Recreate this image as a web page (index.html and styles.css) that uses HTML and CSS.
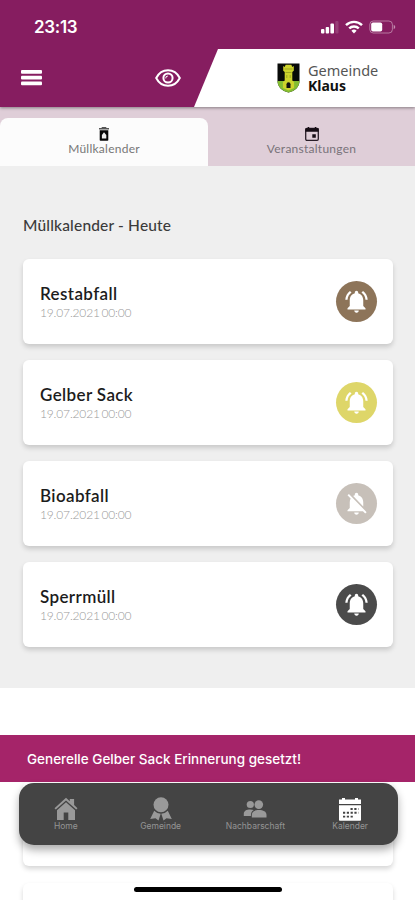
FILE: index.html
```html
<!DOCTYPE html>
<html lang="de">
<head>
<meta charset="utf-8">
<title>Gemeinde Klaus</title>
<link rel="stylesheet" href="styles.css">
</head>
<body>
<svg class="defs" width="0" height="0">
  <symbol id="bell" viewBox="0 0 24 24"><path d="M7.58 4.08 6.15 2.65C3.75 4.48 2.17 7.3 2.03 10.5h2c.15-2.65 1.51-4.97 3.55-6.42zm12.39 6.42h2c-.15-3.2-1.73-6.02-4.12-7.85l-1.42 1.43c2.02 1.45 3.39 3.77 3.54 6.42zM18 11c0-3.07-1.64-5.64-4.5-6.32V4c0-.83-.67-1.5-1.5-1.5s-1.5.67-1.5 1.5v.68C7.63 5.36 6 7.92 6 11v5l-2 2v1h16v-1l-2-2v-5zm-6 11c.14 0 .27-.01.4-.04.65-.14 1.18-.58 1.44-1.18.1-.24.15-.5.15-.78h-4c.01 1.1.9 2 2.01 2z"/></symbol>
  <symbol id="bell-off" viewBox="0 0 24 24"><path d="M20 18.69 7.84 6.14 5.27 3.49 4 4.76l2.8 2.8v.01c-.52.99-.8 2.16-.8 3.42v5l-2 2v1h13.73l2 2L21 19.72l-1-1.03zM12 22c1.11 0 2-.89 2-2h-4c0 1.11.89 2 2 2zm6-7.32V11c0-3.08-1.64-5.64-4.5-6.32V4c0-.83-.67-1.5-1.5-1.5s-1.5.67-1.5 1.5v.68c-.15.03-.29.08-.42.12-.1.03-.2.07-.3.11h-.01c-.01 0-.01 0-.02.01-.23.09-.46.2-.68.31 0 0-.01 0-.01.01L18 14.68z"/></symbol>
</svg>
<div class="app">
  <header class="header">
    <div class="status">
      <span class="time">23:13</span>
      <span class="signals">
        <svg width="18" height="14" viewBox="0 0 18 14"><g fill="#fff"><rect x="0" y="9" width="3.4" height="4.5" rx="1"/><rect x="4.7" y="7" width="3.4" height="6.5" rx="1"/><rect x="9.4" y="3.5" width="3.6" height="10" rx="1"/><rect x="14.3" y="1" width="3.2" height="12.5" rx="1" opacity=".15"/></g></svg>
        <svg width="18" height="14" viewBox="0 0 18 14"><g fill="none" stroke="#fff" stroke-width="2.4"><path d="M1 5.2a11.4 11.4 0 0 1 16 0"/><path d="M4.2 8.4a6.9 6.9 0 0 1 9.6 0"/></g><path fill="#fff" d="M6.4 10.7a3.8 3.8 0 0 1 5.2 0L9 13.4z"/></svg>
        <svg width="27" height="14" viewBox="0 0 27 14"><rect x=".8" y="1" width="22.6" height="12" rx="3.5" fill="none" stroke="#fff" stroke-opacity=".4"/><rect x="2.2" y="2.5" width="11" height="9" rx="1.8" fill="#fff"/><path d="M24.7 4.8v4.4q1.6-.7 1.6-2.2t-1.6-2.2z" fill="#fff" opacity=".5"/></svg>
      </span>
    </div>
    <div class="bar">
      <svg class="menu" width="21" height="16" viewBox="0 0 21 16"><g fill="#fff"><rect y="0" width="21" height="3.7" rx="1"/><rect y="5.8" width="21" height="3.7" rx="1"/><rect y="11.6" width="21" height="3.7" rx="1"/></g></svg>
      <svg class="eye" width="26" height="18" viewBox="0 0 26 18"><g fill="none" stroke="#fff" stroke-width="2"><path d="M1.2 9C3.6 4.3 8 1.2 13 1.2S22.4 4.3 24.8 9C22.4 13.7 18 16.8 13 16.8S3.6 13.7 1.2 9z"/><circle cx="13" cy="9" r="4.6"/></g><path d="M10.8 9.4a2 2 0 0 1 2-2.3" fill="none" stroke="#fff" stroke-width="1"/></svg>
      <div class="brand">
        <svg class="crest" width="23" height="30" viewBox="0 0 23 30"><path d="M.5.5h22v17c0 6.5-4.500 10.500-11 12C5 28 .5 24 .5 17.500z" fill="#080a08"/><path d="M.5 18h22c-.2 6.200-4.600 10-11 11.500C5.100 28 .7 24.200.5 18z" fill="#83bd32"/><path d="M6.200 3 7.800 4l.8-2.200h5.800l.8 2.200 1.600-1v4.800l-1.500 1.200v8.500l1.800 1.500v6l-5.600 2.500L5.900 25v-6l1.800-1.500V9L6.200 7.800z" fill="#cdd32c"/><path d="M7.500 6h8M8.500 9.500h6M9.800 12v3M13.200 12v3" stroke="#8a941e" stroke-width=".7"/><path d="M9.500 25v-3.800a2 2 0 0 1 4 0V25z" fill="#111"/></svg>
        <div class="brand-name"><span>Gemeinde</span><b>Klaus</b></div>
      </div>
    </div>
  </header>
  <nav class="tabs">
    <div class="tab active">
      <svg width="10" height="14" viewBox="0 0 10 14"><path d="M3 0h4l.6 1H10v1.500H0V1h2.400z" fill="#555"/><path d="M.7 3.300h8.600V13q0 .8-.8.800h-7q-.8 0-.8-.8z" fill="#080808"/><path d="M5 5.200 7.300 8v3.400H2.900V8z" fill="#eee"/></svg>
      <span>Müllkalender</span>
    </div>
    <div class="tab">
      <svg width="14" height="14" viewBox="0 0 14 14"><rect x=".7" y="1.500" width="12.600" height="11.800" rx="1.200" fill="none" stroke="#291e28" stroke-width="1.300"/><path d="M.4 1.300h13.200v3.400H.4zM2.700 0h1.500v2H2.700zM9.800 0h1.500v2H9.800zM7.300 7.300h3.500v3.400H7.300z" fill="#160d15"/></svg>
      <span>Veranstaltungen</span>
    </div>
  </nav>
  <main class="today">
    <h1>Müllkalender - Heute</h1>
    <div class="cards">
      <article class="card"><div><h2>Restabfall</h2><time>19.07.2021 00:00</time></div><span class="badge brown"><svg><use href="#bell"/></svg></span></article>
      <article class="card"><div><h2>Gelber Sack</h2><time>19.07.2021 00:00</time></div><span class="badge yellow"><svg><use href="#bell"/></svg></span></article>
      <article class="card"><div><h2>Bioabfall</h2><time>19.07.2021 00:00</time></div><span class="badge muted"><svg><use href="#bell-off"/></svg></span></article>
      <article class="card"><div><h2>Sperrmüll</h2><time>19.07.2021 00:00</time></div><span class="badge dark"><svg><use href="#bell"/></svg></span></article>
    </div>
  </main>
  <section class="upcoming"><div class="card"></div><div class="card"></div></section>
  <div class="overlay">
    <div class="snackbar"><span>Generelle Gelber Sack Erinnerung gesetzt!</span></div>
    <nav class="dock">
      <div class="item"><svg width="24" height="24" viewBox="0 0 24 24"><g fill="#999"><path d="M12 .8 15.800 4.200V2h4.300v6l3.400 3.200-1.300 1.400L12 3.500 1.800 12.600.5 11.200z"/><path d="M12 5.300 21 13.300V23h-6.700v-7.500H9.700V23H3v-9.700z"/></g></svg><span>Home</span></div>
      <div class="item"><svg width="24" height="24" viewBox="0 0 24 24"><g fill="#999"><circle cx="12" cy="7.700" r="7.500"/><path d="M5.200 13.700q2.600 2.800 6.500 3L9.500 23.500l-3-2.300-5.300.8zM18.800 13.700q-2.600 2.800-6.500 3l2.200 6.800 3-2.300 5.300.8z"/></g></svg><span>Gemeinde</span></div>
      <div class="item"><svg width="24" height="24" viewBox="0 0 24 24"><g fill="#999"><circle cx="7.300" cy="7.500" r="3.600"/><path d="M.8 19v-2.400c0-2.700 2.600-4.200 6.500-4.200 1.400 0 2.500.2 3.400.5-2 1.200-2.800 3-2.800 6.100z"/><circle cx="15.800" cy="7.600" r="4.300"/><path d="M8.800 20.500v-2.600c0-3.300 3-4.800 7.200-4.800s7.500 1.500 7.500 4.800v2.600z"/></g></svg><span>Nachbarschaft</span></div>
      <div class="item"><svg width="24" height="24" viewBox="0 0 24 24"><path d="M1 2.500h3V1h3v1.500h10V1h3v1.500h3V7H1zM1 8.300h22V23q0 .8-.8.800H1.800Q1 23.800 1 23z" fill="#fff"/><path d="M12.500 12h8M5 15.800h15.500M5 19.600h11" stroke="#444" stroke-width="1.900" stroke-dasharray="2.200 1.600"/></svg><span>Kalender</span></div>
    </nav>
    <div class="home-indicator"></div>
  </div>
</div>
</body>
</html>
```
FILE: styles.css
```css
* { box-sizing: border-box; }
body { margin: 0; background: #fff; font-family: Lato, sans-serif; }
h1, h2 { margin: 0; }
svg { display: block; flex: none; }
.defs { position: absolute; }
.app { position: relative; width: 415px; height: 900px; overflow: hidden; display: flex; flex-direction: column; }

.header { position: relative; z-index: 1; height: 107px; flex: none; background: #861d60; box-shadow: 0 1px 3px rgba(0, 0, 0, .4); }
.status { height: 49px; padding: 5px 19px 0 34px; display: flex; align-items: center; justify-content: space-between; }
.time { font: 600 17px/20px Inter, sans-serif; color: #fff; letter-spacing: -.3px; }
.signals { display: flex; gap: 6px; }
.bar { height: 58px; padding-left: 21px; display: flex; align-items: center; }
.eye { margin-left: 113px; }
.brand { margin-left: auto; width: 221px; height: 58px; padding-left: 83px; display: flex; align-items: center; gap: 8px; background: #fff; clip-path: polygon(24px 0, 100% 0, 100% 100%, 0 100%); }
.brand-name { font: 14.5px/15px "Noto Sans", sans-serif; color: #555; display: flex; flex-direction: column; }
.brand-name b { font-size: 14px; color: #111; }

.tabs { height: 59px; flex: none; padding-top: 11px; display: grid; grid-template-columns: 208px 207px; background: #dfced8; }
.tab { padding-top: 9px; display: flex; flex-direction: column; align-items: center; font-size: 12px; line-height: 15px; letter-spacing: .25px; color: #79737a; }
.tab.active { background: #fcfcfc; border-radius: 8px 8px 0 0; color: #777; }

.today { height: 522px; flex: none; padding: 49px 22px 0 23px; background: #efefef; }
h1 { font-size: 15.5px; line-height: 20px; font-weight: 500; letter-spacing: .17px; color: #3b3b3b; }
.cards { margin-top: 24px; display: flex; flex-direction: column; gap: 16px; }
.card { height: 85px; padding: 0 16px 0 17px; display: flex; align-items: center; justify-content: space-between; background: #fff; border-radius: 6px; box-shadow: 0 3px 5px rgba(0, 0, 0, .16); }
h2 { font-size: 17px; line-height: 21px; font-weight: 600; letter-spacing: .38px; color: #1c1c1c; }
time { display: block; margin-top: 1px; font-size: 12px; line-height: 16px; font-weight: 300; letter-spacing: -.15px; color: #999; word-spacing: -1.5px; }
.badge { width: 41px; height: 41px; border-radius: 50%; display: grid; place-items: center; }
.badge svg { width: 27px; height: 27px; fill: #fff; }
.brown { background: #8d7459; }
.yellow { background: #ded669; }
.muted { background: #c7c0b9; }
.dark { background: #4b4b4b; }

.upcoming { flex: none; padding: 93px 22px 0 23px; display: flex; flex-direction: column; gap: 17px; }

.overlay { position: absolute; left: 0; right: 0; bottom: 0; height: 165px; }
.snackbar { height: 47px; padding: 0 27px; display: flex; align-items: center; background: #a52469; color: #fff; font: 500 13.5px/20px Inter, sans-serif; }
.dock { height: 62px; margin: 1px 17.5px 0 18.5px; padding: 14px 0 0; display: grid; grid-template-columns: repeat(4, 1fr); background: #444; border-radius: 15px; box-shadow: 0 5px 8px rgba(0, 0, 0, .32); }
.item { display: flex; flex-direction: column; align-items: center; font: 8.5px/10px Inter, sans-serif; color: #949494; }
.home-indicator { width: 148px; height: 5px; margin: 42px 0 0 134px; border-radius: 3px; background: #000; }
```
